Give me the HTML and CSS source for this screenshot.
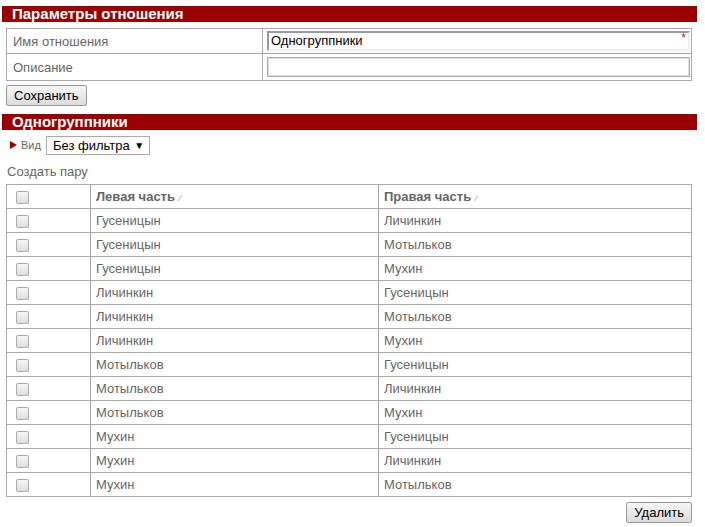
FILE: index.html
```html
<!DOCTYPE html>
<html lang="ru">
<head>
    <meta charset="UTF-8">
    <title>Параметры отношения</title>
    <link rel="stylesheet" href="styles.css">
</head>
<body>

    <!-- Relation settings -->
    <div class="bar">Параметры отношения</div>
    <table class="form">
        <tr>
            <td class="label">Имя отношения</td>
            <td class="field">
                <div class="input input-name">Одногруппники<span class="req">*</span></div>
            </td>
        </tr>
        <tr>
            <td class="label">Описание</td>
            <td class="field"><div class="input input-desc"></div></td>
        </tr>
    </table>
    <div class="actions"><button class="btn">Сохранить</button></div>

    <!-- Pairs list -->
    <div class="bar">Одногруппники</div>
    <div class="view">
        <span class="tri"></span><span class="view-label">Вид</span>
        <span class="select">Без фильтра <span class="arrow">&#9660;</span></span>
    </div>
    <div class="create">Создать пару</div>

    <table class="pairs">
        <thead>
            <tr>
                <th class="chk"><span class="box"></span></th>
                <th>Левая часть <span class="sort">&#8260;</span></th>
                <th>Правая часть <span class="sort">&#8260;</span></th>
            </tr>
        </thead>
        <tbody id="rows"></tbody>
    </table>
    <div class="actions right"><button class="btn">Удалить</button></div>

    <script>
        const names = ['Гусеницын', 'Личинкин', 'Мотыльков', 'Мухин'];
        const tbody = document.getElementById('rows');

        names.forEach(function (left) {
            names.forEach(function (right) {
                if (left === right) return;
                const tr = document.createElement('tr');
                tr.innerHTML = '<td class="chk"><span class="box"></span></td>' +
                    '<td>' + left + '</td><td>' + right + '</td>';
                tbody.appendChild(tr);
            });
        });
    </script>

</body>
</html>
```

FILE: styles.css
```css
/* Base */
body {
    margin: 0;
    padding: 6px 0 0 0;
    font-family: 'Liberation Sans', Arial, sans-serif;
    font-size: 13px;
    color: #666;
    background: #fff;
}

/* Section bars */
.bar {
    background-color: #990000;
    color: #fff;
    font-weight: bold;
    font-size: 15px;
    line-height: 16px;
    height: 16px;
    padding-left: 10px;
    margin: 0 8px 0 2px;
}

/* Settings form */
.form {
    border-collapse: collapse;
    margin: 6px 13px 0 6px;
    width: 686px;
}

.form td {
    border: 1px solid #aaa;
    padding: 0;
}

.form .label {
    width: 249px;
    padding-left: 6px;
    color: #666;
}

.form .field {
    padding: 2px 1px 2px 4px;
}

.input {
    position: relative;
    height: 16px;
    line-height: 16px;
    padding-left: 2px;
    color: #000;
    font-size: 13px;
}

.input-name {
    background: #fff;
    border-top: 2px solid #999;
    border-left: 2px solid #999;
    border-bottom: 2px solid #eee;
    border-right: 2px solid #eee;
}

.input-desc {
    border: 1px solid #aaa;
    box-shadow: inset 0 0 0 1px #ddd;
    height: 18px;
    margin: 1px 0;
}

.req {
    position: absolute;
    right: 2px;
    top: -3px;
    color: #b22;
    font-size: 12px;
}

/* Buttons */
.actions {
    margin: 4px 13px 8px 6px;
}

.actions.right {
    text-align: right;
    margin-top: 5px;
}

.btn {
    font-family: 'Liberation Sans', Arial, sans-serif;
    font-size: 13px;
    color: #000;
    height: 21px;
    padding: 0 7px;
    border: 1px solid #999;
    border-radius: 2px;
    background: linear-gradient(#f6f6f6, #dcdcdc);
}

/* View filter */
.view {
    display: flex;
    align-items: center;
    margin: 6px 0 0 10px;
    height: 18px;
}

.tri {
    width: 0;
    height: 0;
    border-top: 4px solid transparent;
    border-bottom: 4px solid transparent;
    border-left: 7px solid #990000;
    margin-right: 4px;
}

.view-label {
    font-size: 11px;
    margin-right: 5px;
}

.select {
    border: 1px solid #aaa;
    height: 17px;
    line-height: 17px;
    padding: 0 5px 0 6px;
    font-size: 13px;
    color: #000;
}

.select .arrow {
    font-size: 10px;
    margin-left: 1px;
    vertical-align: 1px;
}

.create {
    margin: 10px 0 0 7px;
    color: #666;
}

/* Pairs table */
.pairs {
    border-collapse: collapse;
    margin: 5px 13px 0 6px;
    width: 686px;
}

.pairs th,
.pairs td {
    border: 1px solid #aaa;
    height: 23px;
    padding: 0 0 0 5px;
    text-align: left;
    color: #666;
}

.pairs th {
    font-weight: bold;
}

.pairs .chk {
    width: 74px;
    padding-left: 9px;
}

.pairs th:nth-child(2) {
    width: 282px;
}

.box {
    display: inline-block;
    width: 11px;
    height: 11px;
    border: 1px solid #aaa;
    border-radius: 2px;
    background: linear-gradient(#f4f4f4, #dedede);
    vertical-align: middle;
}

.sort {
    font-size: 9px;
    font-weight: normal;
    color: #999;
    margin-left: 1px;
}
```
